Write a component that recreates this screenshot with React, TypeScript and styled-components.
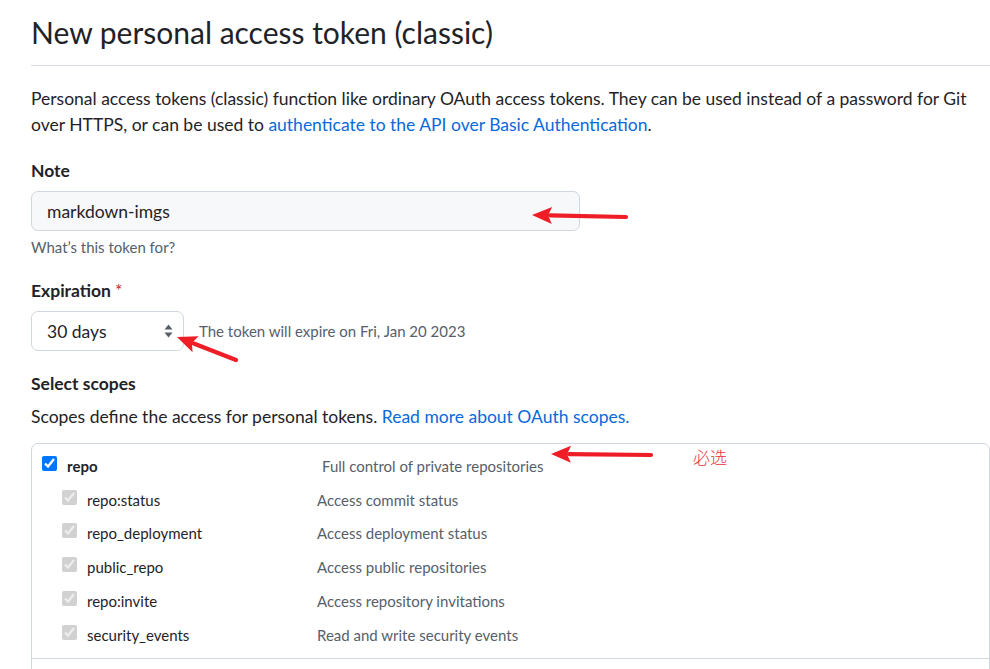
import React from "react";
import styled, { createGlobalStyle } from "styled-components";

const GlobalStyle = createGlobalStyle`
  html, body {
    margin: 0;
    padding: 0;
    background: #ffffff;
  }
  body {
    font-family: Lato, "Noto Sans", sans-serif;
    color: #1f2328;
    -webkit-font-smoothing: antialiased;
  }
  * { box-sizing: border-box; }
`;

const Page = styled.div`
  position: relative;
  width: 990px;
  height: 669px;
  overflow: hidden;
  padding-left: 31px;
`;

const Content = styled.div`
  width: 959px;
`;

const Header = styled.div`
  padding-top: 14px;
  padding-bottom: 15px;
  border-bottom: 1px solid #d8dee4;
`;

const Title = styled.h1`
  margin: 0;
  font-size: 30px;
  line-height: 36px;
  font-weight: 400;
  color: #1f2328;
`;

const Lead = styled.p<{ $mt?: number }>`
  margin: ${(p) => p.$mt ?? 20}px 0 0;
  font-size: 17.5px;
  line-height: 26px;
  color: #1f2328;
`;

const Link = styled.a`
  color: #0969da;
  text-decoration: none;
`;

const FormGroup = styled.div<{ $mt: number }>`
  margin-top: ${(p) => p.$mt}px;
`;

const Label = styled.div`
  font-size: 17.5px;
  line-height: 26px;
  font-weight: 700;
  color: #1f2328;
`;

const Required = styled.span`
  color: #cf222e;
  font-weight: 400;
  margin-left: 4px;
`;

const TextInput = styled.div`
  margin-top: 7px;
  width: 549px;
  height: 40px;
  display: flex;
  align-items: center;
  padding-left: 15px;
  background: #f6f8fa;
  border: 1px solid #d0d7de;
  border-radius: 7px;
  font-size: 17.5px;
  color: #1f2328;
`;

const Hint = styled.div`
  margin-top: 6px;
  font-size: 15px;
  line-height: 20px;
  color: #57606a;
`;

const SelectRow = styled.div`
  margin-top: 7px;
  display: flex;
  align-items: center;
  gap: 15px;
`;

const Select = styled.div`
  width: 153px;
  height: 40px;
  display: flex;
  align-items: center;
  justify-content: space-between;
  padding: 0 10px 0 15px;
  background: #ffffff;
  border: 1px solid #d0d7de;
  border-radius: 7px;
  font-size: 17.5px;
  color: #1f2328;
`;

const SelectNote = styled.span`
  font-size: 15px;
  line-height: 20px;
  color: #57606a;
`;

const ScopesBox = styled.div`
  margin-top: 13px;
  border: 1px solid #d0d7de;
  border-radius: 7px;
  height: 260px;
`;

const ScopeGroup = styled.div`
  padding: 5px 0 6px;
  border-bottom: 1px solid #d0d7de;
`;

const ScopeRow = styled.div<{ $sub?: boolean }>`
  height: 33.8px;
  display: grid;
  grid-template-columns: 15px ${(p) => (p.$sub ? 220 : 245)}px 1fr;
  column-gap: 10px;
  align-items: center;
  padding-left: ${(p) => (p.$sub ? 30 : 10)}px;
`;

const Check = styled.input`
  width: 15px;
  height: 15px;
  margin: 0 0 5px 0;
  accent-color: #0075ff;
`;

const ScopeName = styled.span<{ $strong?: boolean }>`
  font-size: 15px;
  font-weight: ${(p) => (p.$strong ? 700 : 400)};
  color: #1f2328;
`;

const ScopeDesc = styled.span`
  font-size: 15px;
  color: #57606a;
`;

const Overlay = styled.svg`
  position: absolute;
  left: 0;
  top: 0;
  width: 990px;
  height: 669px;
  pointer-events: none;
`;

const Annotation = styled.span`
  position: absolute;
  left: 693px;
  top: 446px;
  font-family: "Noto Sans CJK SC", sans-serif;
  font-size: 17px;
  line-height: 22px;
  font-weight: 300;
  color: #e8333b;
  pointer-events: none;
`;

const SortIcon = () => (
  <svg width="9" height="14" viewBox="0 0 9 14">
    <path d="M4.5 0.5 L8.5 5.5 L0.5 5.5 Z" fill="#57606a" />
    <path d="M0.5 8.5 L8.5 8.5 L4.5 13.5 Z" fill="#57606a" />
  </svg>
);

type Arrow = { tail: [number, number]; tip: [number, number] };

const arrows: Arrow[] = [
  { tail: [626, 217], tip: [532, 215] },
  { tail: [236, 360], tip: [177, 337] },
  { tail: [651, 455], tip: [551, 454] },
];

const ArrowShape = ({ tail, tip }: Arrow) => {
  const dx = tail[0] - tip[0];
  const dy = tail[1] - tip[1];
  const len = Math.hypot(dx, dy);
  const ux = dx / len;
  const uy = dy / len;
  const headLen = 20;
  const half = 8.5;
  const bx = tip[0] + ux * headLen;
  const by = tip[1] + uy * headLen;
  const px = -uy;
  const py = ux;
  const mx = tip[0] + ux * (headLen - 4);
  const my = tip[1] + uy * (headLen - 4);
  return (
    <g>
      <line x1={tail[0]} y1={tail[1]} x2={bx - ux * 2} y2={by - uy * 2} stroke="#ee1d26" strokeWidth={4.2} strokeLinecap="round" />
      <path
        d={`M${tip[0]} ${tip[1]} L${bx + px * half} ${by + py * half} L${mx} ${my} L${bx - px * half} ${by - py * half} Z`}
        fill="#ee1d26"
      />
    </g>
  );
};

type Scope = { name: string; desc: string };

const subScopes: Scope[] = [
  { name: "repo:status", desc: "Access commit status" },
  { name: "repo_deployment", desc: "Access deployment status" },
  { name: "public_repo", desc: "Access public repositories" },
  { name: "repo:invite", desc: "Access repository invitations" },
  { name: "security_events", desc: "Read and write security events" },
];

export default function App() {
  return (
    <>
      <GlobalStyle />
      <Page>
        <Content>
          <Header>
            <Title>New personal access token (classic)</Title>
          </Header>
          <Lead>
            Personal access tokens (classic) function like ordinary OAuth access tokens. They can be used instead of a
            password for Git over HTTPS, or can be used to{" "}
            <Link href="#">authenticate to the API over Basic Authentication</Link>.
          </Lead>

          <FormGroup $mt={20}>
            <Label>Note</Label>
            <TextInput>markdown-imgs</TextInput>
            <Hint>What’s this token for?</Hint>
          </FormGroup>

          <FormGroup $mt={21}>
            <Label>
              Expiration<Required>*</Required>
            </Label>
            <SelectRow>
              <Select>
                <span>30 days</span>
                <SortIcon />
              </Select>
              <SelectNote>The token will expire on Fri, Jan 20 2023</SelectNote>
            </SelectRow>
          </FormGroup>

          <FormGroup $mt={20}>
            <Label>Select scopes</Label>
            <Lead $mt={7}>
              Scopes define the access for personal tokens. <Link href="#">Read more about OAuth scopes.</Link>
            </Lead>
          </FormGroup>

          <ScopesBox>
            <ScopeGroup>
              <ScopeRow>
                <Check type="checkbox" defaultChecked />
                <ScopeName $strong>repo</ScopeName>
                <ScopeDesc>Full control of private repositories</ScopeDesc>
              </ScopeRow>
              {subScopes.map((s) => (
                <ScopeRow $sub key={s.name}>
                  <Check type="checkbox" defaultChecked disabled />
                  <ScopeName>{s.name}</ScopeName>
                  <ScopeDesc>{s.desc}</ScopeDesc>
                </ScopeRow>
              ))}
            </ScopeGroup>
          </ScopesBox>
        </Content>

        <Overlay viewBox="0 0 990 669">
          {arrows.map((a, i) => (
            <ArrowShape key={i} {...a} />
          ))}
        </Overlay>
        <Annotation>必选</Annotation>
      </Page>
    </>
  );
}
